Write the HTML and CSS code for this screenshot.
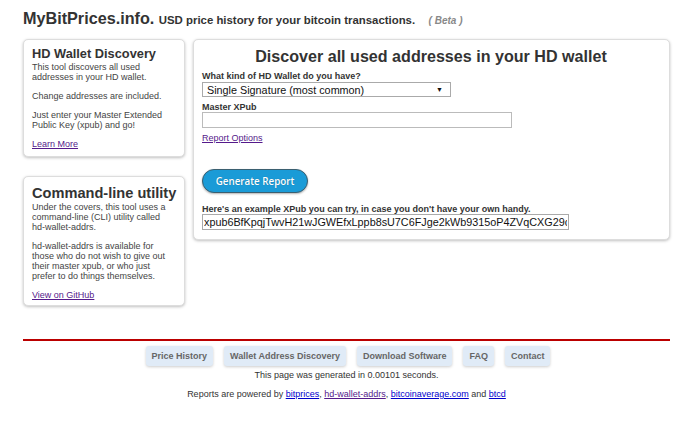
FILE: index.html
```html
<!DOCTYPE html>
<html lang="en">
<head>
  <meta charset="UTF-8">
  <title>MyBitPrices.info - HD Wallet Discovery</title>
  <link rel="stylesheet" href="styles.css">
</head>
<body>

  <div class="sayfa">
    <div class="baslik">
      <span class="site">MyBitPrices.info.</span>
      <span class="slogan">USD price history for your bitcoin transactions.</span>
      <span class="beta">( Beta )</span>
    </div>

    <div class="icerik">
      <div class="yan">
        <div class="kutu">
          <h3>HD Wallet Discovery</h3>
          <p>This tool discovers all used addresses in your HD wallet.</p>
          <p>Change addresses are included.</p>
          <p>Just enter your Master Extended Public Key (xpub) and go!</p>
          <p><a href="#" class="ziyaret">Learn More</a></p>
        </div>

        <div class="kutu ikinci">
          <h3>Command-line utility</h3>
          <p>Under the covers, this tool uses a command-line (CLI) utility called <span class="tek">hd-wallet-addrs.</span></p>
          <p>hd-wallet-addrs is available for those who do not wish to give out their master xpub, or who just prefer to do things themselves.</p>
          <p><a href="#" class="ziyaret">View on GitHub</a></p>
        </div>
      </div>

      <div class="kutu ana">
        <h2>Discover all used addresses in your HD wallet</h2>
        <form>
          <label class="etiket">What kind of HD Wallet do you have?</label>
          <div class="secim">
            <span>Single Signature (most common)</span>
            <span class="ok">&#9660;</span>
          </div>

          <label class="etiket">Master XPub</label>
          <input type="text" class="alan">

          <a href="#" class="ziyaret secenek">Report Options</a>

          <button type="button" class="buton">Generate Report</button>

          <label class="etiket">Here's an example XPub you can try, in case you don't have your own handy.</label>
          <input type="text" class="ornek" value="xpub6BfKpqjTwvH21wJGWEfxLppb8sU7C6FJge2kWb9315oP4ZVqCXG29cdUtkyu7YQhHyfA5nt63nzcNZHYmqXYHDxYo8mm1Xq1dAC7YtodwUR">
        </form>
      </div>
    </div>

    <div class="alt">
      <div class="menu">
        <a href="#">Price History</a>
        <a href="#">Wallet Address Discovery</a>
        <a href="#">Download Software</a>
        <a href="#">FAQ</a>
        <a href="#">Contact</a>
      </div>
      <div class="sure">This page was generated in 0.00101 seconds.</div>
      <div class="kaynak">
        Reports are powered by <a href="#">bitprices</a>, <a href="#" class="ziyaret">hd-wallet-addrs</a>, <a href="#">bitcoinaverage.com</a> and <a href="#">btcd</a>
      </div>
    </div>
  </div>

</body>
</html>
```

FILE: styles.css
```css
body {
  margin: 0;
  font-family: "Liberation Sans", Arial, sans-serif;
  color: #333;
  background-color: white;
}
.sayfa {
  width: 647px;
  margin-left: 23px;
}
.baslik {
  height: 39px;
  padding-top: 8px;
  box-sizing: border-box;
  font-size: 16px;
  line-height: 20px;
  white-space: nowrap;
}
.site {
  font-size: 16.2px;
  font-weight: bold;
}
.slogan {
  font-size: 11.4px;
  font-weight: bold;
}
.beta {
  font-size: 10px;
  font-style: italic;
  font-weight: bold;
  color: #888;
  margin-left: 9px;
}
.icerik {
  display: flex;
  align-items: flex-start;
  gap: 8px;
}
.yan {
  width: 162px;
  display: flex;
  flex-direction: column;
  gap: 19px;
}
.kutu {
  background-color: white;
  border: 1px solid #ddd;
  border-radius: 5px;
  box-shadow: 0 1px 3px rgba(0,0,0,0.25);
  padding: 6px 12px 7px 8px;
  box-sizing: border-box;
}
.kutu h3 {
  font-size: 12.8px;
  margin: 0;
  line-height: 16px;
  white-space: nowrap;
}
.ikinci {
  padding-top: 8px;
  padding-bottom: 5px;
}
.ikinci h3 {
  font-size: 14.6px;
  line-height: 17px;
}
.kutu p {
  font-size: 9px;
  line-height: 10px;
  margin: 0 0 9px 0;
  color: #444;
}
.kutu p:last-child {
  margin-bottom: 0;
}
.tek {
  white-space: nowrap;
}
a {
  color: #00c;
}
a.ziyaret {
  color: #551a8b;
}
.ana {
  flex: 1;
  padding: 7px 9px 9px 8px;
}
.ana h2 {
  font-size: 16.1px;
  text-align: center;
  margin: 0 0 6px 0;
  line-height: 18px;
}
.etiket {
  display: block;
  font-size: 9px;
  font-weight: bold;
  line-height: 10px;
}
.secim {
  width: 249px;
  height: 15px;
  margin: 1px 0 5px 0;
  border: 1px solid #aaa;
  box-sizing: border-box;
  display: flex;
  justify-content: space-between;
  align-items: center;
  padding: 0 7px 0 4px;
  font-size: 10.8px;
  color: #111;
}
.ok {
  font-size: 7px;
}
.alan {
  display: block;
  width: 310px;
  height: 16px;
  border: 1px solid #bbb;
  box-sizing: border-box;
  margin: 0 0 5px 0;
  padding: 0;
}
.secenek {
  display: block;
  font-size: 9px;
  line-height: 10px;
}
.buton {
  display: block;
  margin: 26px 0 11px 0;
  width: 106px;
  height: 24px;
  background-color: #1a9bd7;
  color: white;
  border: 1px solid #3b5f70;
  border-radius: 12px;
  font-family: "Open Sans", sans-serif;
  font-size: 9.8px;
  font-weight: 600;
  text-shadow: 0 0 1px rgba(0,0,0,0.3);
  box-shadow: 0 1px 2px rgba(0,0,0,0.3);
  cursor: pointer;
}
.ornek {
  display: block;
  width: 367px;
  height: 16px;
  border: 1px solid #aaa;
  box-sizing: border-box;
  padding: 0 1px;
  font-family: "Liberation Sans", Arial, sans-serif;
  font-size: 10.8px;
  color: #111;
}
.alt {
  margin-top: 33px;
  border-top: 2px solid #b00;
  text-align: center;
}
.menu {
  display: flex;
  justify-content: center;
  gap: 11px;
  padding: 5px 0 0 3px;
}
.menu a {
  background-color: #e0ebf7;
  color: #666;
  font-size: 9px;
  line-height: 10px;
  font-weight: bold;
  text-decoration: none;
  padding: 5px 6px;
  border-radius: 3px;
  box-shadow: 0 1px 3px rgba(0,0,0,0.2);
}
.sure {
  font-size: 9px;
  line-height: 12px;
  margin-top: 3px;
}
.kaynak {
  font-size: 9px;
  line-height: 12px;
  margin-top: 7px;
}
```
